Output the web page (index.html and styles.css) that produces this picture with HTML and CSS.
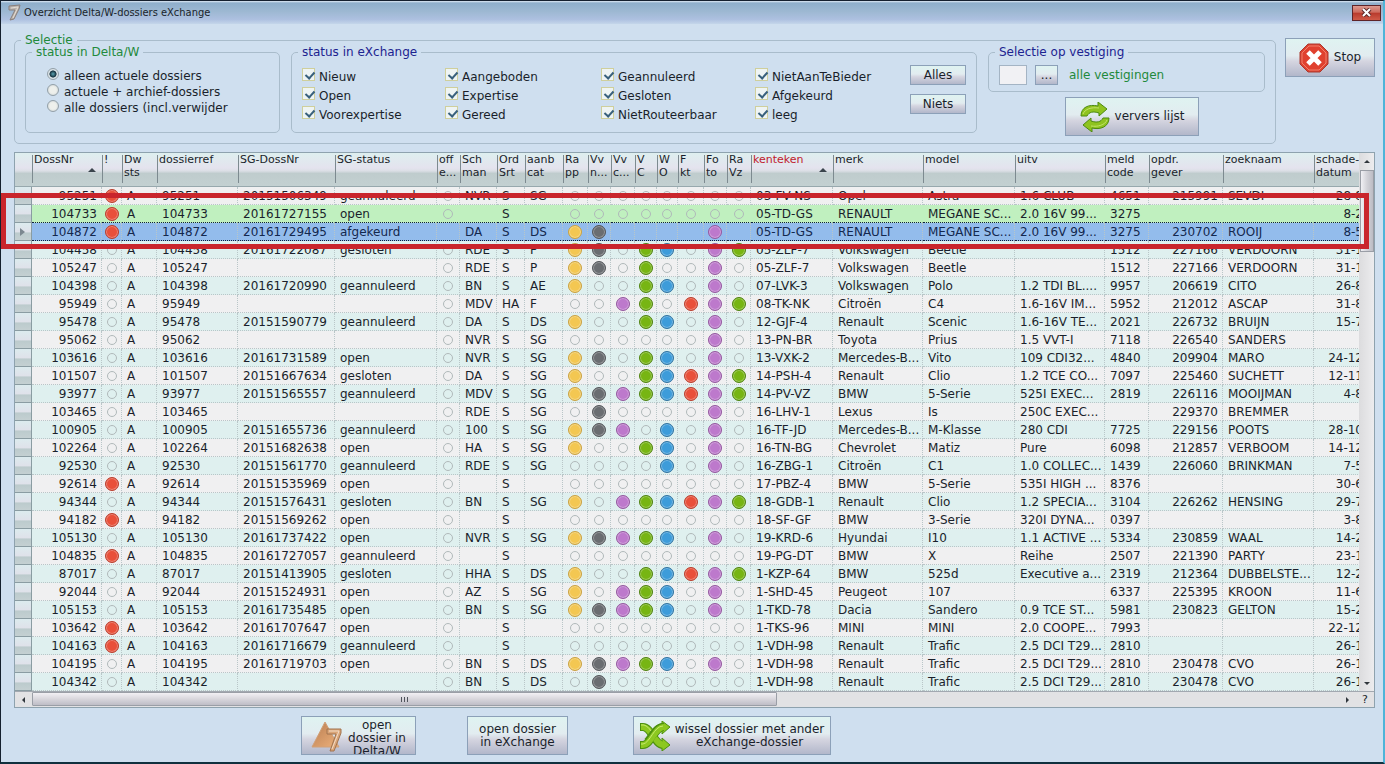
FILE: index.html
```html
<!DOCTYPE html>
<html lang="nl">
<head>
	<meta charset="UTF-8">
	<title>Overzicht Delta/W-dossiers eXchange</title>
	<link rel="stylesheet" href="styles.css">
</head>
<body>
<div class="window">
	<header class="titlebar">
		<svg class="logo" width="14" height="17" viewBox="0 0 14 17">
			<path d="M2 2 L13 1 L12 5 L7 15 L3 16 L8 6 L2 6 Z" fill="#b9b3ae" stroke="#8a7f7a"/>
			<path d="M4 4 L11 3 L6 14" fill="none" stroke="#e6dcd2"/>
		</svg>
		<h1>Overzicht Delta/W-dossiers eXchange</h1>
		<button class="close" aria-label="Sluiten">
			<svg width="11" height="9" viewBox="0 0 11 9"><path d="M2 1 L9 8 M9 1 L2 8" stroke="#5c2a2a" stroke-width="4"/><path d="M2 1 L9 8 M9 1 L2 8" stroke="#fff" stroke-width="2"/></svg>
		</button>
	</header>

	<div class="top">
		<fieldset class="selectie">
			<legend class="green">Selectie</legend>
			<div class="groups">
				<fieldset class="delta">
					<legend class="green">status in Delta/W</legend>
					<label><input type="radio" name="delta" checked>alleen actuele dossiers</label>
					<label><input type="radio" name="delta">actuele + archief-dossiers</label>
					<label><input type="radio" name="delta">alle dossiers (incl.verwijder</label>
				</fieldset>
				<fieldset class="exchange">
					<legend class="blue">status in eXchange</legend>
					<div class="exchange-row">
						<div class="checks">
							<label><input type="checkbox" checked>Nieuw</label>
							<label><input type="checkbox" checked>Open</label>
							<label><input type="checkbox" checked>Voorexpertise</label>
							<label><input type="checkbox" checked>Aangeboden</label>
							<label><input type="checkbox" checked>Expertise</label>
							<label><input type="checkbox" checked>Gereed</label>
							<label><input type="checkbox" checked>Geannuleerd</label>
							<label><input type="checkbox" checked>Gesloten</label>
							<label><input type="checkbox" checked>NietRouteerbaar</label>
							<label><input type="checkbox" checked>NietAanTeBieder</label>
							<label><input type="checkbox" checked>Afgekeurd</label>
							<label><input type="checkbox" checked>leeg</label>
						</div>
						<div class="check-buttons">
							<button>Alles</button>
							<button>Niets</button>
						</div>
					</div>
				</fieldset>
				<div class="side">
					<fieldset class="vestiging">
						<legend class="blue">Selectie op vestiging</legend>
						<div class="vestiging-row">
							<input type="text" id="vestiging">
							<button>...</button>
							<label class="green" for="vestiging">alle vestigingen</label>
						</div>
					</fieldset>
					<button class="big refresh">
						<svg width="30" height="30" viewBox="0 0 30 30">
							<g fill="#8fc31f" stroke="#4d8a10" stroke-linejoin="round">
								<path d="M1 14 C1 5 9 2 18 4 L18 0 L27 7 L19 14 L19 11 C13 9 9 10 7 14 Z"/>
								<path d="M29 16 C29 25 20 28 12 26 L12 30 L3 23 L11 16 L11 19 C17 21 21 20 23 16 Z"/>
							</g>
							<path d="M3 12 C5 7 11 5 19 6 M27 18 C25 23 18 25 11 24" fill="none" stroke="#c3e36a"/>
						</svg>
						<span>ververs lijst</span>
					</button>
				</div>
			</div>
		</fieldset>
		<button class="big stop">
			<svg width="30" height="30" viewBox="0 0 30 30">
				<path d="M9 1 H21 L29 9 V21 L21 29 H9 L1 21 V9 Z" fill="#e0412f" stroke="#a83a30"/>
				<path d="M10 3 H20 L27 10 V20 L20 27 H10 L3 20 V10 Z" fill="none" stroke="#f0806c"/>
				<path d="M9 9 L21 21 M21 9 L9 21" stroke="#fff" stroke-width="5"/>
			</svg>
			<span>Stop</span>
		</button>
	</div>

	<div class="grid">
		<div class="grid-main">
			<div class="viewport">
				<table id="dossiers">
					<colgroup id="cols"></colgroup>
					<thead>
						<tr>
							<th></th>
							<th class="sorted">DossNr</th>
							<th>!</th>
							<th>Dw<br>sts</th>
							<th>dossierref</th>
							<th>SG-DossNr</th>
							<th>SG-status</th>
							<th>off<br>e...</th>
							<th>Sch<br>man</th>
							<th>Ord<br>Srt</th>
							<th>aanb<br>cat</th>
							<th>Ra<br>pp</th>
							<th>Vv<br>n...</th>
							<th>Vv<br>c...</th>
							<th>V<br>C</th>
							<th>W<br>O</th>
							<th>F<br>kt</th>
							<th>Fo<br>to</th>
							<th>Ra<br>Vz</th>
							<th class="sorted red">kenteken</th>
							<th>merk</th>
							<th>model</th>
							<th>uitv</th>
							<th>meld<br>code</th>
							<th>opdr.<br>gever</th>
							<th>zoeknaam</th>
							<th>schade-<br>datum</th>
						</tr>
					</thead>
					<tbody id="rows"></tbody>
				</table>
			</div>
			<div class="vscroll">
				<span class="arrow up"></span>
				<div class="vthumb"></div>
				<span class="arrow down"></span>
			</div>
		</div>
		<div class="hscroll">
			<span class="arrow-box"><span class="arrow left"></span></span>
			<div class="htrack"><div class="hthumb"><i></i><i></i><i></i></div></div>
			<span class="arrow-box"><span class="arrow right"></span></span>
			<span class="help">?</span>
		</div>
		<div class="marker"></div>
	</div>

	<footer class="actions">
		<button class="big open-delta">
			<svg width="32" height="32" viewBox="0 0 32 32">
				<defs><linearGradient id="bronze" x1="0" y1="0" x2="1" y2="1"><stop offset="0" stop-color="#b87c50"/><stop offset="1" stop-color="#eeb27c"/></linearGradient></defs>
				<path d="M14 2 L28 27 H1 Z" fill="url(#bronze)" stroke="#d0a078"/>
				<path d="M16 9 H30 V13 L23 31 H19 L25 14 H16 Z" fill="#dba679" stroke="#a0734e"/>
				<path d="M18 11 H28 L21 29" fill="none" stroke="#f3dcc6"/>
			</svg>
			<span>open<br>dossier in<br>Delta/W</span>
		</button>
		<button class="big open-exchange"><span>open dossier<br>in eXchange</span></button>
		<button class="big switch">
			<svg width="30" height="30" viewBox="0 0 30 30">
				<g fill="none" stroke="#4d9010" stroke-width="8">
					<path d="M0 6 H3 C11 6 15 24 23 24"/>
					<path d="M0 24 H3 C11 24 15 6 23 6"/>
				</g>
				<g fill="#8cc820" stroke="#4d9010" stroke-linejoin="round">
					<path d="M22 0 L30 6 L22 13 Z"/>
					<path d="M22 17 L30 24 L22 30 Z"/>
				</g>
				<path d="M1 6 H3 C11 6 15 24 24 24" fill="none" stroke="#8cc820" stroke-width="6"/>
				<path d="M7 21 C12 17 15 6 24 6" fill="none" stroke="#4d9010" stroke-width="8"/>
				<path d="M1 24 H3 C11 24 15 6 24 6" fill="none" stroke="#8cc820" stroke-width="6"/>
				<path d="M1 23 H3 C10 22 14 5 23 5 M1 4 H4 C7 5 9 7 11 10" fill="none" stroke="#c8ec70"/>
			</svg>
			<span>wissel dossier met ander<br>eXchange-dossier</span>
		</button>
	</footer>
</div>
<script src="script.js"></script>
</body>
</html>
```
FILE: styles.css
```css
*{
	box-sizing: border-box;
}
body{
	margin: 0;
	font-family: "DejaVu Sans", Verdana, sans-serif;
	font-size: 12px;
	color: #1a1f2b;
}
button, input{
	font: inherit;
	color: inherit;
}
.window{
	min-height: 100vh;
	background: #cfdfef;
	border: 1px solid #15202e;
	border-right: 2px solid #4fb4d8;
	border-bottom: 2px solid #10303e;
	overflow: hidden;
}
.titlebar{
	display: flex;
	align-items: center;
	height: 23px;
	padding: 0 2px 0 6px;
	gap: 3px;
	background: linear-gradient(#dfeaf5 0, #8fafcb 2px, #9db8d2 45%, #adc0e0 80%, #c4d6ea);
}
.titlebar h1{
	flex: 1;
	margin: 0;
	font-family: "DejaVu Sans Condensed", "DejaVu Sans", sans-serif;
	font-size: 11px;
	font-weight: normal;
}
.close{
	display: flex;
	align-items: center;
	justify-content: center;
	width: 29px;
	height: 16px;
	padding: 0;
	border: 1px solid #5e2428;
	background: linear-gradient(#dd9a90, #cd6a5c 45%, #b83a2c 50%, #cf5a48);
}
.green{
	color: #1f8a3c;
}
.blue{
	color: #1c2390;
}
.top{
	display: flex;
	align-items: flex-start;
	gap: 9px;
	padding: 10px 8px 0 13px;
}
fieldset{
	min-width: 0;
	margin: 0;
	padding: 0 10px;
	border: 1px solid #a9bccb;
	border-radius: 5px;
}
legend{
	margin-left: -4px;
	padding: 0 4px;
	line-height: 12px;
}
.selectie{
	flex: 1;
	height: 110px;
}
.groups{
	display: flex;
	gap: 11px;
}
.delta{
	width: 255px;
	height: 87px;
}
.delta label{
	display: flex;
	align-items: center;
	height: 16px;
	padding-left: 11px;
	white-space: nowrap;
}
.delta legend + label{
	margin-top: 10px;
}
input[type='radio']{
	appearance: none;
	width: 12px;
	height: 12px;
	margin: 0 5px 4px 0;
	border: 1px solid #93a0a8;
	border-radius: 50%;
	background: radial-gradient(#eef0ec 45%, #c4ccd0);
}
input[type='radio']:checked{
	background: radial-gradient(#4c8a98 10%, #15303c 45%, #dce4e8 55%);
}
.exchange{
	flex: 1;
	height: 87px;
}
.exchange-row{
	display: flex;
	padding-top: 7px;
}
.checks{
	flex: 1;
	display: grid;
	grid-auto-flow: column;
	grid-template-columns: 143fr 156fr 154fr 155fr;
	grid-template-rows: repeat(3, 19px);
}
.checks label{
	display: flex;
	align-items: center;
	white-space: nowrap;
	padding-top: 4px;
}
input[type='checkbox']{
	appearance: none;
	width: 13px;
	height: 13px;
	margin: 0 4px 4px 0;
	border: 1px solid #cfcf9c;
	background: #eef4f4;
	position: relative;
}
input[type='checkbox']:checked::after{
	content: "";
	position: absolute;
	left: 4px;
	top: 1px;
	width: 4px;
	height: 7px;
	border: solid #38607c;
	border-width: 0 2px 2px 0;
	transform: rotate(42deg);
}
button{
	padding: 0;
	border: 1px solid #8ca0b8;
	background: linear-gradient(#dff3f1, #e2ecf0 45%, #d5d5e0 60%, #b2b7ca);
}
.check-buttons{
	display: flex;
	flex-direction: column;
	gap: 9px;
}
.check-buttons button{
	width: 56px;
	height: 20px;
}
.side{
	width: 277px;
}
.vestiging{
	height: 46px;
}
.vestiging-row{
	display: flex;
	align-items: center;
	gap: 8px;
	padding-top: 7px;
}
.vestiging-row input{
	width: 28px;
	height: 20px;
	padding: 0 2px;
	border: 1px solid #a4b4c4;
	background: #f1f1f4;
}
.vestiging-row button{
	width: 23px;
	height: 20px;
	margin-right: 3px;
}
.big{
	display: flex;
	align-items: center;
	justify-content: center;
	height: 39px;
	gap: 5px;
	line-height: 13px;
	overflow: hidden;
}
.refresh{
	width: 134px;
	margin: 5px 0 0 77px;
}
.stop{
	width: 90px;
	margin-top: 4px;
}
.grid{
	position: relative;
	margin: 8px 8px 0 13px;
	border: 1px solid #8ea2ae;
}
.grid-main{
	display: flex;
	background: #e4e4e6;
}
.viewport{
	flex: 1;
	min-width: 0;
	overflow: hidden;
}
table{
	table-layout: fixed;
	width: 0;
	border-collapse: separate;
	border-spacing: 0;
}
th{
	position: relative;
	height: 34px;
	padding: 0 0 0 2px;
	vertical-align: top;
	text-align: left;
	font-size: 11px;
	font-weight: normal;
	line-height: 13px;
	white-space: nowrap;
	border-bottom: 1px solid #97a8ad;
	background: linear-gradient(#7d8a90, #7d8a90) 0 2px / 1px 28px no-repeat, linear-gradient(#deefef, #e4e3ee 45%, #dcdfe6 54%, #bfcccd 62%, #c3d0d1);
}
th:first-child{
	background: linear-gradient(#deefef, #e4e3ee 45%, #dcdfe6 54%, #bfcccd 62%, #c3d0d1);
}
th.red{
	color: #c0202c;
}
th.sorted::after{
	content: "";
	position: absolute;
	right: 6px;
	top: 15px;
	border: solid transparent;
	border-width: 0 4px 4px;
	border-bottom-color: #3a444c;
}
td{
	height: 18px;
	padding: 1px 4px 0 5px;
	line-height: 16px;
	white-space: nowrap;
	overflow: hidden;
	background: #f0f0f1;
	border-right: 1px dotted #b9c6c8;
	border-bottom: 1px dotted #b9c6c8;
}
tr:nth-child(even) td{
	background: #dff0ef;
}
tr.matched td{
	background: #c0f0bf;
	border-right-color: #c0f0bf;
	border-bottom-color: #10203c;
}
tr.selected td{
	color: #13284e;
	background: #93bcec;
	border-bottom-color: #10203c;
}
table td.handle{
	padding: 0 0 0 5px;
	color: #1a1f2b;
	border-right: 1px solid #8a9ca2;
	border-bottom: 1px solid #8a9ca2;
	background: linear-gradient(#dcebee, #dfe2ea 50%, #bccbcd 60%, #c4d0d2);
}
td.num{
	text-align: right;
}
td.icon{
	padding: 0;
	text-align: center;
	line-height: 0;
}
.dot{
	display: inline-block;
	width: 10px;
	height: 10px;
	border: 1px solid #b0b9ba;
	border-radius: 50%;
	vertical-align: middle;
}
.dot.on{
	width: 14px;
	height: 14px;
	box-shadow: inset 0 0 0 1px rgba(255, 255, 255, .3);
}
.dot.r{ background: #e9503a; border-color: #b8402f; }
.dot.y{ background: #f3c752; border-color: #c9a244; }
.dot.k{ background: #6a6d71; border-color: #55585c; }
.dot.p{ background: #bd79cc; border-color: #94599f; }
.dot.g{ background: #77b513; border-color: #4f8212; }
.dot.b{ background: #3d9cda; border-color: #32739f; }
.arrow{
	width: 0;
	height: 0;
	border: 3px solid transparent;
}
.up{ border-top-width: 0; border-bottom-color: #30363c; }
.down{ border-bottom-width: 0; border-top-color: #30363c; }
.left{ border-left-width: 0; border-right-color: #30363c; }
.right{ border-right-width: 0; border-left-color: #30363c; }
.play{
	display: block;
	width: 0;
	height: 0;
	border: solid transparent;
	border-width: 4px 0 4px 5px;
	border-left-color: #7c8890;
}
.vscroll{
	display: flex;
	flex-direction: column;
	align-items: center;
	width: 15px;
	padding: 7px 0 6px;
	background: linear-gradient(90deg, #dcdcde, #ececee);
}
.vthumb{
	width: 14px;
	height: 82px;
	margin: 7px 0 auto;
	border: 1px solid #9a9ea6;
	background: linear-gradient(90deg, #f0f0f4, #d2d2d8 50%, #bcbcc4);
}
.hscroll{
	display: flex;
	align-items: center;
	height: 16px;
	border-top: 1px solid #a2a8b0;
	background: #e2e2e4;
}
.arrow-box{
	display: flex;
	justify-content: center;
	width: 17px;
}
.htrack{
	flex: 1;
	height: 15px;
}
.hthumb{
	display: flex;
	align-items: center;
	justify-content: center;
	gap: 2px;
	width: 57%;
	height: 14px;
	border: 1px solid #9a9ea6;
	border-radius: 1px;
	background: linear-gradient(#f2f0f4, #d8d6dc 50%, #bebdc6);
}
.hthumb i{
	width: 1px;
	height: 5px;
	background: #50545c;
}
.help{
	width: 18px;
	text-align: center;
	font-size: 11px;
}
/* red frame round the two dossiers with the same kenteken */
.marker{
	position: absolute;
	left: -14px;
	right: 5px;
	top: 40px;
	height: 56px;
	border: 5px solid #c9252c;
	pointer-events: none;
}
.actions{
	display: flex;
	padding: 8px 0 0 300px;
}
.open-delta{
	width: 115px;
	margin-right: 51px;
}
.open-delta span{
	align-self: flex-start;
	padding-top: 2px;
}
.open-exchange{
	width: 101px;
	margin-right: 65px;
}
.switch{
	width: 198px;
}
```
FILE: script.js
```js
var widths = [17,70,20,35,81,97,102,23,37,28,38,25,23,24,22,21,26,23,24,82,90,92,90,44,74,91,54];

// dossnr, alert, sg-dossnr, status, sch man, ord srt, aanb cat, icons, kenteken, merk, model, uitv, meld, opdr, zoeknaam, datum
// icons: one letter per column, '.' is an open circle
var dossiers = [
	['95251',1,'20151506349','geannuleerd','NVR','S','SG','........','03-FV-NS','Opel','Astra','1.6 CLUB','4651','215991','SEVDI','28-8'],
	['104733',1,'20161727155','open','','S','','........','05-TD-GS','RENAULT','MEGANE SC...','2.0 16V 99...','3275','','','8-2'],
	['104872',1,'20161729495','afgekeurd','DA','S','DS','yk    p ','05-TD-GS','RENAULT','MEGANE SC...','2.0 16V 99...','3275','230702','ROOIJ','8-5'],
	['104458',0,'20161722087','gesloten','RDE','S','P','yk.gb.pg','05-ZLF-7','Volkswagen','Beetle','','1512','227166','VERDOORN','31-1'],
	['105247',0,'','','RDE','S','P','yk.g..p.','05-ZLF-7','Volkswagen','Beetle','','1512','227166','VERDOORN','31-1'],
	['104398',0,'20161720990','geannuleerd','BN','S','AE','y..gb.p.','07-LVK-3','Volkswagen','Polo','1.2 TDI BL....','9957','206619','CITO','26-8'],
	['95949',0,'','','MDV','HA','F','..pg.rpg','08-TK-NK','Citroën','C4','1.6-16V IM...','5952','212012','ASCAP','31-8'],
	['95478',0,'20151590779','geannuleerd','DA','S','DS','y..gb.p.','12-GJF-4','Renault','Scenic','1.6-16V TE...','2021','226732','BRUIJN','15-7'],
	['95062',0,'','','NVR','S','SG','......p.','13-PN-BR','Toyota','Prius','1.5 VVT-I','7118','226540','SANDERS',''],
	['103616',0,'20161731589','open','NVR','S','SG','yk.gb.p.','13-VXK-2','Mercedes-B...','Vito','109 CDI32...','4840','209904','MARO','24-12'],
	['101507',0,'20151667634','gesloten','DA','S','SG','y..gbrpg','14-PSH-4','Renault','Clio','1.2 TCE CO...','7097','225460','SUCHETT','12-11'],
	['93977',0,'20151565557','geannuleerd','MDV','S','SG','ykpgbrpg','14-PV-VZ','BMW','5-Serie','525I EXEC...','2819','226116','MOOIJMAN','4-8'],
	['103465',0,'','','RDE','S','SG','.k....p.','16-LHV-1','Lexus','Is','250C EXEC...','','229370','BREMMER',''],
	['100905',0,'20151655736','geannuleerd','100','S','SG','ykp.b.p.','16-TF-JD','Mercedes-B...','M-Klasse','280 CDI','7725','229156','POOTS','28-10'],
	['102264',0,'20151682638','open','HA','S','SG','y..gb.p.','16-TN-BG','Chevrolet','Matiz','Pure','6098','212857','VERBOOM','14-12'],
	['92530',0,'20151561770','geannuleerd','RDE','S','SG','....b.p.','16-ZBG-1','Citroën','C1','1.0 COLLEC...','1439','226060','BRINKMAN','7-5'],
	['92614',1,'20151535969','open','','S','','........','17-PBZ-4','BMW','5-Serie','535I HIGH ...','8376','','','30-6'],
	['94344',0,'20151576431','gesloten','BN','S','SG','y.pgbrpg','18-GDB-1','Renault','Clio','1.2 SPECIA...','3104','226262','HENSING','29-7'],
	['94182',1,'20151569262','open','','S','','........','18-SF-GF','BMW','3-Serie','320I DYNA...','0397','','','3-8'],
	['105130',0,'20161737422','open','NVR','S','SG','ykpgb.p.','19-KRD-6','Hyundai','I10','1.1 ACTIVE ...','5334','230859','WAAL','14-2'],
	['104835',1,'20161727057','geannuleerd','','S','','........','19-PG-DT','BMW','X','Reihe','2507','221390','PARTY','23-1'],
	['87017',0,'20151413905','gesloten','HHA','S','DS','y..gbrpg','1-KZP-64','BMW','525d','Executive a...','2319','212364','DUBBELSTE...','12-2'],
	['92044',0,'20151524931','open','AZ','S','SG','y.pgb.p.','1-SHD-45','Peugeot','107','','6337','225395','KROON','11-6'],
	['105153',0,'20161735485','open','BN','S','SG','ykpgb.p.','1-TKD-78','Dacia','Sandero','0.9 TCE ST...','5981','230823','GELTON','15-2'],
	['103642',1,'20161707647','open','','S','','........','1-TKS-96','MINI','MINI','2.0 COOPE...','7993','','','22-12'],
	['104163',1,'20161716679','geannuleerd','','S','','........','1-VDH-98','Renault','Trafic','2.5 DCI T29...','2810','','','26-1'],
	['104195',0,'20161719703','open','BN','S','DS','ykpgb.p.','1-VDH-98','Renault','Trafic','2.5 DCI T29...','2810','230478','CVO','26-1'],
	['104342',0,'','','BN','S','DS','.k......','1-VDH-98','Renault','Trafic','2.5 DCI T29...','2810','230478','CVO','26-1']
];
var selected = 2;
var matched = 1;

function cell(text, cls){
	return '<td' + (cls ? ' class="' + cls + '"' : '') + '>' + text + '</td>';
}
function icon(code){
	if(code == ' ') return cell('', 'icon');
	if(code == '.') return cell('<span class="dot"></span>', 'icon');
	return cell('<span class="dot on ' + code + '"></span>', 'icon');
}
function buildRow(d, i){
	var cls = i == selected ? 'selected' : (i == matched ? 'matched' : '');
	var out = '<tr class="' + cls + '">';
	out += cell(i == selected ? '<span class="play"></span>' : '', 'handle');
	out += cell(d[0], 'num') + icon(d[1] ? 'r' : '.') + cell('A') + cell(d[0]) + cell(d[2]) + cell(d[3]);
	out += icon(i == selected ? ' ' : '.') + cell(d[4]) + cell(d[5]) + cell(d[6]);
	for(var n = 0; n < d[7].length; n++){
		out += icon(d[7][n]);
	}
	out += cell(d[8]) + cell(d[9]) + cell(d[10]) + cell(d[11]) + cell(d[12]);
	out += cell(d[13], 'num') + cell(d[14]) + cell(d[15], 'num');
	return out + '</tr>';
}

document.getElementById('cols').innerHTML = widths.map(function(w){
	return '<col style="width:' + w + 'px">';
}).join('');
document.getElementById('rows').innerHTML = dossiers.map(buildRow).join('');
```
